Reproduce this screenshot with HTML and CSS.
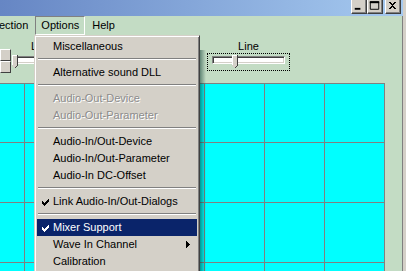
FILE: index.html
```html
<!DOCTYPE html>
<html>
<head>
<meta charset="utf-8">
<link rel="stylesheet" href="styles.css">
</head>
<body>
<div class="window">
  <div class="titlebar">
    <div class="caption-buttons">
      <span class="cbtn"><svg width="16" height="14" viewBox="0 0 16 14"><rect x="4" y="9" width="6" height="2" fill="#000"/></svg></span>
      <span class="cbtn"><svg width="16" height="14" viewBox="0 0 16 14"><path d="M3.5 2.5h9v8h-9z" fill="none" stroke="#000"/><rect x="3" y="2" width="10" height="2" fill="#000"/></svg></span>
      <span class="cbtn close"><svg width="16" height="14" viewBox="0 0 16 14" shape-rendering="crispEdges"><path d="M4 3h2v1h1v1h2v-1h1v-1h2v1h-1v1h-1v1h-1v1h1v1h1v1h1v1h-2v-1h-1v-1h-2v1h-1v1h-2v-1h1v-1h1v-1h1v-1h-1v-1h-1v-1h-1z" fill="#000"/></svg></span>
    </div>
  </div>
  <div class="menubar">
    <span class="mitem cut">ection</span>
    <span class="mitem open">Options</span>
    <span class="mitem">Help</span>
  </div>
  <div class="client">
    <div class="controls">
      <div class="spin"><span class="spin-btn"></span><span class="spin-btn"></span></div>
      <div class="slider-group left-group">
        <span class="label">L</span>
        <div class="slider">
          <div class="track"></div>
          <svg class="thumb" width="6" height="14" viewBox="0 0 6 14" shape-rendering="crispEdges"><path d="M0 0h5v10l-2 3h-1l-2-3z" fill="#d4d0c8"/><path d="M0 0h5v1h-4v9h-1z" fill="#fff"/><path d="M5 0h1v10l-3 4v-1l2-3z" fill="#404040"/></svg>
        </div>
      </div>
      <div class="slider-group right-group">
        <span class="label">Line</span>
        <div class="slider focused">
          <div class="track"></div>
          <svg class="thumb" width="6" height="14" viewBox="0 0 6 14" shape-rendering="crispEdges"><path d="M0 0h5v10l-2 3h-1l-2-3z" fill="#d4d0c8"/><path d="M0 0h5v1h-4v9h-1z" fill="#fff"/><path d="M5 0h1v10l-3 4v-1l2-3z" fill="#404040"/></svg>
        </div>
      </div>
    </div>
    <div class="grid">
      <i></i><i></i><i></i><i></i><i></i><i></i><i></i>
      <i></i><i></i><i></i><i></i><i></i><i></i><i></i>
      <i></i><i></i><i></i><i></i><i></i><i></i><i></i>
      <i></i><i></i><i></i><i></i><i></i><i></i><i></i>
    </div>
  </div>

  <div class="shadow"></div>
  <div class="dropdown">
    <div class="item">Miscellaneous</div>
    <div class="sep"></div>
    <div class="item">Alternative sound DLL</div>
    <div class="sep"></div>
    <div class="item disabled">Audio-Out-Device</div>
    <div class="item disabled">Audio-Out-Parameter</div>
    <div class="sep"></div>
    <div class="item">Audio-In/Out-Device</div>
    <div class="item">Audio-In/Out-Parameter</div>
    <div class="item">Audio-In DC-Offset</div>
    <div class="sep"></div>
    <div class="item"><svg class="check" width="7" height="7" viewBox="0 0 7 7" shape-rendering="crispEdges"><path d="M6 0h1v3h-1v1h-1v1h-1v1h-1v1h-1v-1h-1v-1h-1v-3h1v1h1v1h1v-1h1v-1h1v-1h1z" fill="currentColor"/></svg>Link Audio-In/Out-Dialogs</div>
    <div class="sep"></div>
    <div class="item selected"><svg class="check" width="7" height="7" viewBox="0 0 7 7" shape-rendering="crispEdges"><path d="M6 0h1v3h-1v1h-1v1h-1v1h-1v1h-1v-1h-1v-1h-1v-3h1v1h1v1h1v-1h1v-1h1v-1h1z" fill="currentColor"/></svg>Mixer Support</div>
    <div class="item">Wave In Channel<svg class="arrow" width="4" height="7" viewBox="0 0 4 7" shape-rendering="crispEdges"><path d="M0 0h1v1h1v1h1v1h1v1h-1v1h-1v1h-1v1h-1z" fill="currentColor"/></svg></div>
    <div class="item">Calibration</div>
  </div>
</div>
</body>
</html>
```

FILE: styles.css
```css
* { box-sizing: border-box; }
html, body {
  margin: 0;
  padding: 0;
  width: 406px;
  height: 271px;
  overflow: hidden;
}
body {
  font-family: "Liberation Sans", Arial, sans-serif;
  font-size: 11px;
  color: #000;
}
.window {
  position: relative;
  width: 406px;
  height: 271px;
  background: #c3dcc4;
  border-right: 3px solid #d4d0c8;
  box-shadow: inset -4px 0 0 -3px #808080;
  overflow: hidden;
}
.titlebar {
  height: 16px;
  background: linear-gradient(to right, #6686c4 0%, #a6caf0 100%);
  display: flex;
  justify-content: flex-end;
  align-items: flex-start;
  padding-right: 2px;
}
.caption-buttons {
  display: flex;
  margin-top: -1px;
}
.cbtn {
  width: 16px;
  height: 15px;
  background: #d4d0c8;
  border: 1px solid;
  border-color: #fff #404040 #404040 #fff;
  box-shadow: inset -1px -1px 0 #808080;
  display: flex;
  align-items: center;
  justify-content: center;
}
.cbtn svg { display: block; margin: -1px 0 0 -1px; }
.cbtn.close { margin-left: 2px; }
.menubar {
  height: 19px;
  display: flex;
  align-items: stretch;
}
.mitem {
  padding: 0 6px;
  line-height: 17px;
  border: 1px solid transparent;
}
.mitem.cut { margin-left: -8px; padding-right: 6px; }
.mitem.open {
  border-color: #808080 #fff #fff #808080;
  padding: 0 5px;
}
.client {
  display: flex;
  flex-direction: column;
}
.controls {
  height: 48px;
  display: flex;
  align-items: flex-start;
}
.spin {
  margin-top: 14px;
  width: 11px;
  display: flex;
  flex-direction: column;
}
.spin-btn {
  height: 12px;
  background: #d4d0c8;
  border: 1px solid;
  border-color: #fff #404040 #404040 #fff;
}
.slider-group {
  display: flex;
  flex-direction: column;
}
.label { line-height: 14px; margin-top: 4px; }
.left-group {
  margin-left: 1px;
  width: 22px;
}
.left-group .label { padding-left: 19px; }
.left-group .slider { width: 60px; }
.right-group { margin-left: 173px; width: 83px; align-items: center; }
.slider {
  position: relative;
  width: 100%;
  height: 18px;
  padding: 2px 4px;
  border: 1px dotted transparent;
}
.slider.focused { border-color: #000; }
.track {
  height: 8px;
  background: #fff;
  border: 1px solid;
  border-color: #808080 #fff #fff #808080;
  box-shadow: inset 1px 1px 0 #404040, inset -1px -1px 0 #d4d0c8;
}
.thumb {
  position: absolute;
  top: 1px;
  display: block;
}
.left-group .slider { padding-left: 0; border: 0; padding-top: 3px; }
.left-group .thumb { left: 0; top: 2px; }
.right-group .thumb { left: 24px; }
.grid {
  width: 385px;
  border-top: 1px solid #808080;
  background: #00ffff;
  display: grid;
  grid-template-columns: 25px repeat(6, 60px);
  grid-template-rows: 59px repeat(3, 60px);
}
.grid i {
  display: block;
  border-right: 1px solid #808080;
  border-bottom: 1px solid #808080;
}
.shadow {
  position: absolute;
  left: 200px;
  top: 50px;
  width: 6px;
  height: 230px;
  background: linear-gradient(to right, rgba(0,50,40,0.5), rgba(0,50,40,0));
}
.dropdown {
  position: absolute;
  left: 34px;
  top: 35px;
  width: 166px;
  height: 250px;
  background: #d4d0c8;
  border: 1px solid;
  border-color: #d4d0c8 #404040 #404040 #d4d0c8;
  box-shadow: inset 1px 1px 0 #fff, inset -1px -1px 0 #808080;
  padding: 2px;
}
.item {
  position: relative;
  height: 17px;
  line-height: 16px;
  padding-left: 16px;
  white-space: nowrap;
}
.item.disabled {
  color: #8c8c8c;
  text-shadow: 1px 1px 0 #fff;
}
.item.selected {
  background: #0a246a;
  color: #fff;
}
.check {
  position: absolute;
  left: 5px;
  top: 6px;
}
.arrow {
  position: absolute;
  right: 7px;
  top: 5px;
}
.sep {
  height: 9px;
  margin: 0 1px;
  padding-top: 3px;
}
.sep::before {
  content: "";
  display: block;
  height: 1px;
  background: #808080;
  box-shadow: 0 1px 0 #fff;
}
```
